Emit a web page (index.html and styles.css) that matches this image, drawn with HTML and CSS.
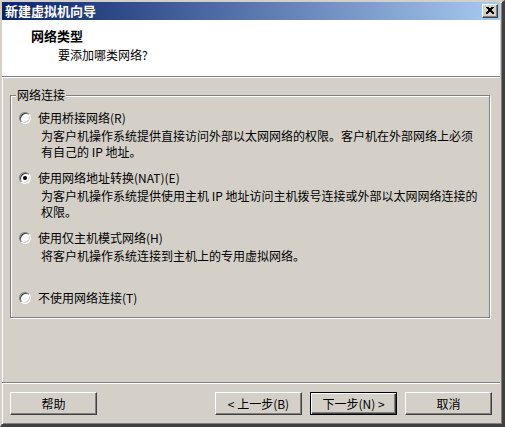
FILE: index.html
```html
<!DOCTYPE html>
<html lang="zh-CN">
<head>
<meta charset="utf-8">
<title>新建虚拟机向导</title>
<link rel="stylesheet" href="styles.css">
</head>
<body>
<div class="window">
  <div class="titlebar">
    <span class="title-text">新建虚拟机向导</span>
    <span class="close-btn">
      <svg width="8" height="7" viewBox="0 0 8 7"><path d="M0.5 0 L7.5 7 M1.5 0 L8.5 7 M7.5 0 L0.5 7 M6.5 0 L-0.5 7" stroke="#000" stroke-width="1" fill="none" shape-rendering="crispEdges"/></svg>
    </span>
  </div>
  <div class="header">
    <div class="header-title">网络类型</div>
    <div class="header-sub">要添加哪类网络?</div>
  </div>
  <div class="main">
    <fieldset class="group">
      <legend class="group-legend">网络连接</legend>
      <div class="option">
        <div class="option-label"><span class="radio"></span><span>使用桥接网络(R)</span></div>
        <div class="option-desc">为客户机操作系统提供直接访问外部以太网网络的权限。客户机在外部网络上必须<br>有自己的 IP 地址。</div>
      </div>
      <div class="option">
        <div class="option-label"><span class="radio checked"></span><span>使用网络地址转换(NAT)(E)</span></div>
        <div class="option-desc">为客户机操作系统提供使用主机 IP 地址访问主机拨号连接或外部以太网网络连接的<br>权限。</div>
      </div>
      <div class="option">
        <div class="option-label"><span class="radio"></span><span>使用仅主机模式网络(H)</span></div>
        <div class="option-desc">将客户机操作系统连接到主机上的专用虚拟网络。</div>
      </div>
      <div class="option last">
        <div class="option-label"><span class="radio"></span><span>不使用网络连接(T)</span></div>
      </div>
    </fieldset>
  </div>
  <div class="buttons">
    <button class="btn">帮助</button>
    <div class="btn-group">
      <button class="btn">&lt; 上一步(B)</button>
      <button class="btn default">下一步(N) &gt;</button>
      <button class="btn">取消</button>
    </div>
  </div>
</div>
</body>
</html>
```

FILE: styles.css
```css
* { box-sizing: border-box; }

html, body {
  margin: 0;
  padding: 0;
  background: #d4d0c8;
}

body {
  font-family: "Noto Sans CJK SC", "Liberation Sans", sans-serif;
  font-size: 12px;
  line-height: 16px;
  color: #000;
}

.window {
  width: 505px;
  height: 427px;
  display: flex;
  flex-direction: column;
  background: #d4d0c8;
  border-style: solid;
  border-width: 2px 3px 3px 2px;
  border-color: #d4d0c8 #404040 #404040 #d4d0c8;
  box-shadow: inset 1px 1px #fff, inset -1px -1px #808080;
  padding: 0 2px 1px 0;
}

.titlebar {
  height: 18px;
  display: flex;
  align-items: center;
  justify-content: space-between;
  padding: 0 2px 0 3px;
  background: linear-gradient(to right, #0a246a, #a6caf0);
}

.title-text {
  color: #fff;
  font-weight: bold;
  font-size: 13px;
  line-height: 16px;
}

.close-btn {
  width: 16px;
  height: 14px;
  display: flex;
  align-items: center;
  justify-content: center;
  background: #d4d0c8;
  border: 1px solid;
  border-color: #fff #404040 #404040 #fff;
  box-shadow: inset -1px -1px #808080;
}

.close-btn svg { display: block; margin-top: -1px; }

.header {
  height: 57px;
  background: #fff;
  padding: 7px 0 0 29px;
  border-bottom: 1px solid #808080;
  box-shadow: 0 1px #fff;
}

.header-title {
  font-weight: bold;
  font-size: 13px;
  line-height: 17px;
}

.header-sub {
  margin: 3px 0 0 27px;
}

.main {
  flex: 1;
  padding-top: 10px;
  border-bottom: 1px solid #808080;
  box-shadow: 0 1px #fff;
}

.group {
  margin: 0 10px 0 8px;
  padding: 7px 8px 11px 8px;
  border: 1px solid #808080;
  box-shadow: inset 1px 1px #fff, 1px 1px #fff;
  min-inline-size: 0;
}

.group-legend {
  padding: 0 1px;
  margin-left: -3px;
  background: #d4d0c8;
}

.option {
  min-height: 60px;
}

.option.last {
  min-height: 0;
}

.option-label {
  display: flex;
  align-items: center;
  gap: 7px;
}

.option-desc {
  margin: 2px 0 0 22px;
}

.radio {
  position: relative;
  flex: none;
  width: 12px;
  height: 12px;
  border-radius: 50%;
  background: #fff;
  border: 1px solid;
  border-color: #808080 #fff #fff #808080;
  box-shadow: inset 1px 1px #404040, inset -1px -1px #d4d0c8;
}

.radio.checked::after {
  content: "";
  position: absolute;
  left: 3px;
  top: 3px;
  width: 4px;
  height: 4px;
  border-radius: 50%;
  background: #000;
}

.buttons {
  display: flex;
  justify-content: space-between;
  padding: 9px 8px 8px 8px;
}

.btn-group {
  display: flex;
  gap: 8px;
}

.btn {
  width: 87px;
  height: 23px;
  padding: 0;
  font-family: inherit;
  font-size: 12px;
  line-height: 16px;
  color: #000;
  background: #d4d0c8;
  border: 1px solid;
  border-color: #fff #404040 #404040 #fff;
  box-shadow: inset -1px -1px #808080;
  border-radius: 0;
}

.btn.default {
  border-color: #000;
  box-shadow: inset 1px 1px #fff, inset -1px -1px #404040, inset -2px -2px #808080;
}
```
